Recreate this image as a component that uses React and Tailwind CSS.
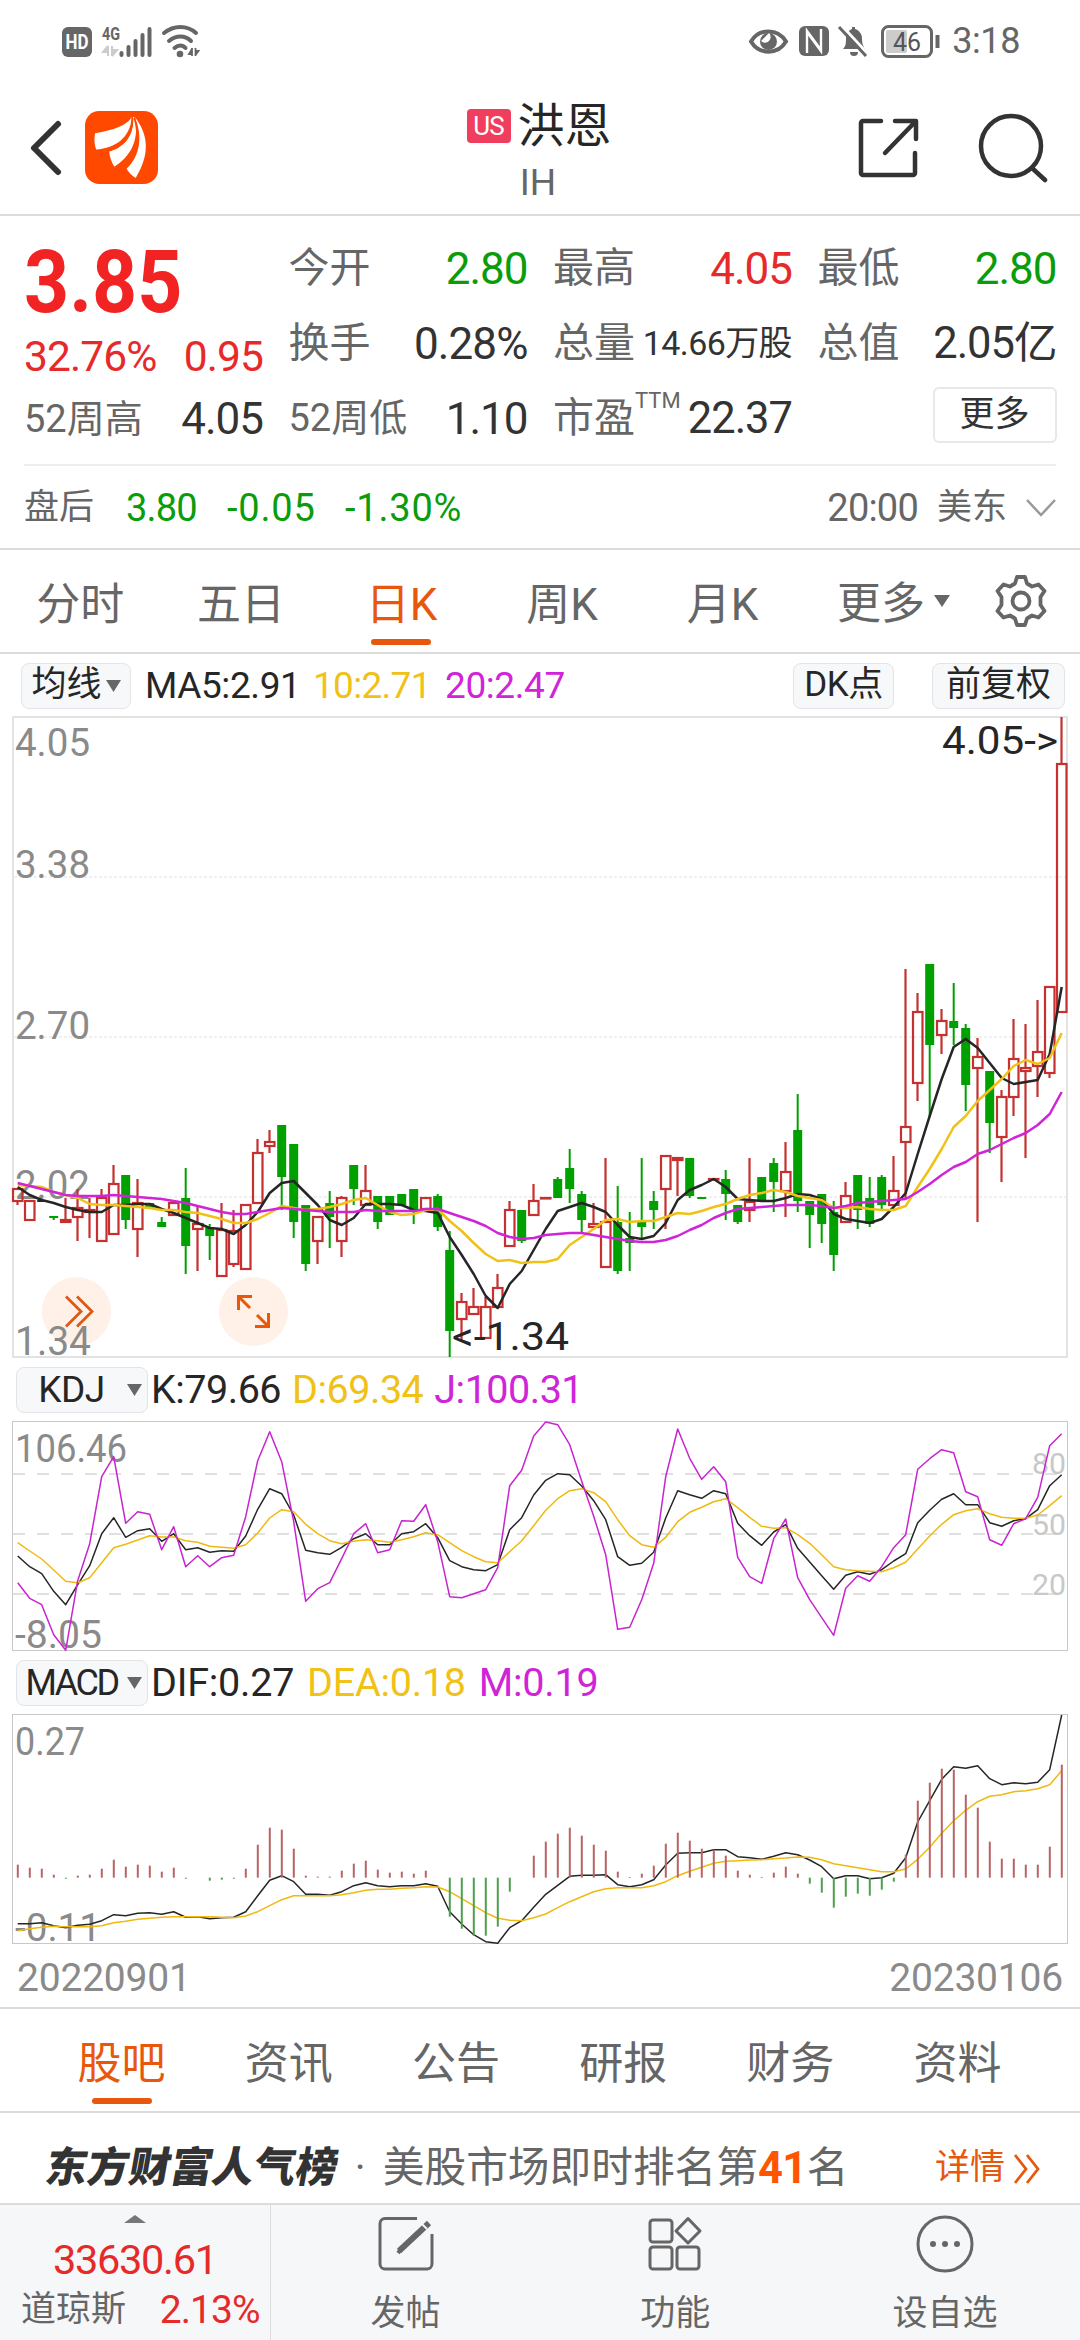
import clsx from "clsx";

// [direction, high, bodyTop, bodyBottom, low] in chart pixels
const candles = [
  ["u", 471, 471, 485, 488], ["u", 483, 483, 504, 504], ["k", 483, 483, 485, 485], ["d", 499, 499, 501, 503],
  ["u", 481, 502, 506, 506], ["u", 472, 490, 501, 524], ["u", 481, 492, 496, 521], ["u", 472, 480, 525, 525],
  ["u", 448, 466, 518, 518], ["d", 458, 458, 503, 512], ["u", 462, 485, 513, 540], ["d", 486, 486, 491, 491],
  ["d", 500, 505, 510, 510], ["u", 485, 485, 499, 499], ["d", 451, 481, 529, 557], ["u", 488, 506, 513, 554],
  ["d", 507, 511, 519, 543], ["u", 486, 512, 560, 560], ["u", 493, 513, 548, 550], ["u", 487, 487, 553, 553],
  ["u", 422, 435, 487, 487], ["u", 413, 424, 430, 436], ["d", 408, 408, 460, 493], ["d", 427, 427, 505, 521],
  ["d", 488, 488, 547, 554], ["u", 499, 499, 525, 547], ["d", 474, 486, 500, 531], ["u", 479, 480, 525, 540],
  ["d", 448, 448, 472, 488], ["u", 448, 473, 489, 489], ["d", 479, 479, 505, 512], ["d", 479, 479, 498, 498],
  ["d", 477, 477, 488, 488], ["d", 472, 472, 493, 507], ["u", 480, 480, 493, 493], ["d", 477, 479, 510, 514],
  ["d", 514, 533, 614, 640], ["u", 576, 584, 603, 625], ["u", 571, 589, 598, 598], ["u", 580, 589, 622, 622],
  ["u", 557, 570, 591, 591], ["u", 484, 492, 530, 530], ["d", 493, 493, 524, 526], ["u", 467, 483, 499, 499],
  ["u", 480, 480, 482, 482], ["d", 460, 462, 481, 481], ["d", 432, 451, 472, 486], ["d", 474, 477, 503, 516],
  ["u", 486, 506, 511, 511], ["u", 441, 504, 551, 551], ["d", 469, 505, 554, 557], ["d", 495, 521, 526, 554],
  ["d", 441, 505, 510, 523], ["d", 474, 484, 493, 512], ["u", 438, 438, 473, 512], ["u", 440, 440, 444, 479],
  ["d", 441, 441, 479, 481], ["d", 480, 480, 482, 482], ["u", 461, 461, 463, 463], ["d", 453, 462, 477, 503],
  ["d", 488, 488, 505, 507], ["u", 441, 484, 494, 505], ["d", 460, 460, 484, 484], ["d", 441, 446, 465, 495],
  ["u", 425, 454, 475, 500], ["d", 377, 413, 484, 495], ["d", 484, 484, 498, 531], ["d", 477, 477, 507, 526],
  ["d", 484, 495, 538, 554], ["u", 465, 478, 506, 506], ["d", 458, 458, 493, 512], ["d", 460, 481, 507, 510],
  ["d", 458, 460, 488, 492], ["u", 439, 473, 489, 489], ["u", 252, 409, 426, 481], ["u", 276, 294, 367, 384],
  ["d", 247, 247, 328, 400], ["u", 292, 303, 319, 337], ["d", 266, 304, 311, 328], ["d", 307, 311, 368, 394],
  ["u", 321, 339, 352, 505], ["d", 354, 354, 406, 436], ["u", 373, 379, 421, 465], ["u", 302, 341, 381, 399],
  ["u", 307, 350, 355, 441], ["u", 283, 334, 350, 380], ["u", 269, 269, 357, 361], ["u", 0, 46, 296, 296],
];

const ma5 = [
  470, 478, 483, 486, 490, 493, 495, 495, 488, 488, 487, 487, 492, 496, 501, 506, 511, 512, 517, 508, 495, 476,
  466, 464, 476, 488, 503, 508, 501, 487, 487, 487, 488, 493, 494, 496, 520, 538, 557, 579, 591, 567, 554, 533,
  512, 494, 490, 486, 490, 495, 508, 520, 522, 519, 506, 483, 473, 468, 462, 470, 482, 483, 484, 484, 481, 477,
  478, 482, 497, 502, 504, 506, 502, 490, 476, 437, 399, 362, 330, 322, 331, 346, 361, 367, 365, 363, 337, 270,
];
const ma10 = [
  468, 469, 470, 475, 478, 481, 487, 488, 488, 489, 490, 491, 493, 493, 495, 496, 499, 502, 506, 506, 502, 496,
  489, 491, 493, 492, 490, 487, 483, 481, 488, 495, 498, 497, 493, 492, 504, 514, 526, 537, 544, 543, 546, 545,
  545, 542, 528, 520, 512, 503, 502, 505, 504, 504, 500, 496, 497, 494, 490, 487, 482, 478, 476, 473, 475, 479,
  481, 483, 491, 491, 490, 492, 493, 493, 489, 470, 452, 432, 410, 399, 384, 373, 362, 349, 343, 347, 341, 316,
];
const ma20 = [
  466, 469, 472, 475, 478, 479, 479, 479, 478, 479, 480, 481, 482, 484, 486, 489, 492, 495, 497, 497, 495, 493,
  491, 492, 493, 494, 495, 495, 495, 493, 494, 494, 494, 494, 492, 492, 496, 500, 504, 509, 516, 520, 522, 521,
  518, 517, 516, 516, 518, 520, 522, 524, 525, 525, 523, 519, 513, 508, 501, 496, 492, 491, 490, 489, 488, 488,
  488, 489, 491, 489, 486, 485, 484, 483, 482, 475, 467, 458, 450, 445, 437, 433, 427, 421, 416, 408, 397, 375,
];

const kdj = {
  k: [
    586, 618, 639, 692, 732, 672, 615, 519, 471, 530, 510, 504, 542, 519, 567, 561, 575, 570, 572, 526, 446, 384,
    399, 463, 569, 576, 581, 560, 534, 519, 552, 552, 519, 513, 489, 531, 600, 618, 627, 630, 612, 507, 471, 403,
    359, 339, 342, 376, 420, 477, 588, 614, 608, 575, 472, 390, 402, 413, 390, 399, 488, 525, 554, 514, 492, 563,
    604, 645, 686, 644, 633, 641, 627, 601, 579, 486, 449, 416, 399, 432, 432, 486, 497, 480, 474, 447, 375, 342,
  ],
  d: [
    546, 571, 595, 628, 662, 666, 651, 606, 561, 551, 538, 525, 529, 529, 540, 545, 557, 560, 563, 552, 517, 472,
    447, 453, 491, 519, 540, 549, 542, 537, 540, 545, 537, 528, 516, 522, 546, 570, 588, 603, 606, 573, 540, 495,
    449, 414, 390, 384, 396, 423, 477, 525, 552, 560, 530, 483, 455, 440, 423, 414, 441, 470, 497, 503, 501, 522,
    548, 582, 618, 627, 630, 632, 633, 621, 605, 565, 526, 491, 462, 450, 444, 459, 470, 473, 473, 463, 435, 405,
  ],
  j: [
    666, 713, 732, 822, 869, 660, 549, 348, 288, 488, 453, 461, 567, 498, 618, 585, 618, 591, 584, 468, 300, 213,
    303, 483, 722, 684, 666, 594, 519, 489, 576, 567, 480, 482, 432, 543, 708, 711, 699, 687, 621, 375, 329, 226,
    184, 192, 252, 362, 467, 582, 806, 800, 717, 608, 348, 205, 293, 356, 318, 363, 590, 648, 668, 534, 475, 651,
    717, 771, 824, 683, 645, 662, 618, 561, 522, 326, 294, 267, 276, 393, 408, 537, 554, 489, 474, 410, 255, 219,
  ],
};

const macd = {
  bars: [
    642, 651, 654, 672, 684, 675, 672, 654, 627, 648, 642, 645, 663, 651, 684, 681, 690, 687, 684, 654, 582, 531,
    537, 594, 675, 678, 678, 660, 639, 630, 657, 666, 663, 669, 660, 681, 798, 834, 855, 855, 828, 723, 681, 615,
    573, 549, 531, 555, 582, 600, 663, 679, 669, 645, 579, 546, 570, 594, 597, 615, 660, 672, 679, 666, 648, 669,
    699, 726, 771, 738, 729, 735, 717, 693, 612, 450, 396, 354, 357, 432, 471, 573, 624, 624, 642, 642, 588, 342,
  ],
  dif: [
    819, 819, 816, 825, 831, 824, 821, 810, 792, 795, 788, 786, 791, 783, 800, 798, 804, 801, 800, 783, 735, 689,
    675, 693, 731, 731, 734, 723, 705, 696, 705, 708, 705, 705, 699, 707, 783, 820, 852, 873, 878, 831, 810, 770,
    731, 704, 677, 674, 674, 672, 702, 708, 702, 687, 643, 608, 606, 606, 597, 597, 618, 621, 626, 617, 606, 612,
    628, 648, 684, 675, 675, 684, 681, 668, 621, 514, 450, 386, 348, 353, 345, 384, 402, 396, 399, 395, 357, 193,
  ],
  dea: [
    840, 834, 830, 827, 828, 828, 828, 825, 816, 812, 806, 803, 800, 798, 798, 798, 798, 800, 801, 796, 783, 765,
    747, 735, 735, 735, 735, 732, 726, 719, 716, 716, 713, 711, 708, 709, 723, 744, 765, 786, 803, 809, 810, 801,
    790, 771, 753, 738, 723, 714, 711, 711, 711, 705, 693, 675, 662, 650, 638, 632, 630, 628, 627, 624, 622, 619,
    620, 627, 639, 645, 651, 657, 663, 663, 655, 626, 590, 548, 510, 479, 453, 437, 432, 423, 420, 414, 402, 360,
  ],
};

const px = (i) => 17.7 + i * 12;
const points = (values, y = (v) => v) =>
  values.map((v, i) => `${px(i).toFixed(1)},${y(v).toFixed(1)}`).join(" ");
// indicator series are stored at three units per pixel
const kdjY = (v) => (v - 181) / 3;
const macdY = (v) => (v - 190) / 3;

const Line = ({ values, y, color, width = 1.5 }) => (
  <polyline points={points(values, y)} fill="none" stroke={color} strokeWidth={width} strokeLinejoin="round" />
);

const Label = ({ x, y, w, size = 38, fill = "#8a8a8a", children }) => (
  <text x={x} y={y} textLength={w} lengthAdjust="spacingAndGlyphs" fontSize={size} fill={fill}>
    {children}
  </text>
);

const StatusBar = () => (
  <div className="flex h-[80px] items-center justify-between pl-[62px] pr-[60px] pt-[1px] text-[#666]">
    <svg width="140" height="50" viewBox="0 -8 140 50">
      <rect x="0" y="3" width="30" height="30" rx="6" fill="#666" />
      <text x="3.5" y="25" fontSize="20" fontWeight="700" fill="#fff" textLength="23" lengthAdjust="spacingAndGlyphs">HD</text>
      <text x="40" y="15.500" fontSize="18.500" fontWeight="700" fill="#666" textLength="18" lengthAdjust="spacingAndGlyphs">4G</text>
      <path d="M46 22v10M46 22l-5 6h5M50 22v10M50 32l5-6h-5" fill="#ccc" stroke="#ccc" strokeWidth="2" />
      <path d="M59.500 29v2M66.500 23v8M73.500 17v14M80.500 11v20M87.500 5v26" stroke="#666" strokeWidth="4" strokeLinecap="round" />
      <g fill="none" stroke="#666" strokeWidth="4" strokeLinecap="round">
        <path d="M102 9c10-8 23-8 32 0" />
        <path d="M107 17c7-6 16-6 22 0" />
        <path d="M112.500 24c4-3.500 8-3.500 11 0" />
      </g>
      <circle cx="118" cy="30" r="3.300" fill="#666" />
      <path d="M130 24v8M130 25l-3 5h3M133.500 24v8M133.500 31l3-4h-3" fill="#666" stroke="#666" strokeWidth="1.800" />
    </svg>
    <div className="flex items-center">
      <svg width="194" height="34" viewBox="0 0 194 34">
        <path d="M2 17.500C10 4 29 4 37 17.500C29 31 10 31 2 17.500Z" fill="none" stroke="#666" strokeWidth="4" />
        <circle cx="19.500" cy="17.500" r="8.500" fill="#666" />
        <path d="M20 9a5.500 5.500 0 0 1-8 8" fill="#fff" />
        <rect x="50" y="2" width="30" height="30" rx="6" fill="#666" />
        <path d="M58 29V7l14 19M72 5v22L58 8" fill="none" stroke="#fff" strokeWidth="2.400" />
        <path d="M94 25c3-3 3-6 3-11c0-5 3-8 6-9v-2h3v2c4 1 7 5 7 9c0 6 1 8 3 11Z" fill="#666" />
        <path d="M101 28h8a4 4 0 0 1-8 0Z" fill="#666" />
        <path d="M93 2l26 28" stroke="#fff" strokeWidth="3" />
        <path d="M90 3l27 29" stroke="#666" strokeWidth="3" />
        <rect x="133.500" y="2.500" width="49" height="30" rx="6" fill="none" stroke="#666" strokeWidth="3" />
        <rect x="137" y="6" width="21" height="23" rx="2" fill="#ccc" />
        <path d="M188.500 11v13" stroke="#666" strokeWidth="4" />
        <text x="144" y="26.500" fontSize="26" fill="#555" textLength="28" lengthAdjust="spacingAndGlyphs">46</text>
      </svg>
      <span className="ml-[9px] text-[36px] tracking-[-0.4px]">3:18</span>
    </div>
  </div>
);

const Header = () => (
  <div className="flex h-[136px] items-center justify-between border-b-2 border-[#dcdcdc] pl-[28px] pr-[32px]">
    <div className="flex w-[316px] items-center gap-[20px] pt-[1px]">
      <svg width="37" height="60" viewBox="0 0 37 60">
        <path d="M30 6L6 30L30 54" fill="none" stroke="#333" strokeWidth="6" strokeLinecap="round" strokeLinejoin="round" />
      </svg>
      <svg width="73" height="73" viewBox="0 0 72 72">
        <rect width="72" height="72" rx="14" fill="#ff4800" />
        <path d="M46 6C42 14 28 19 10 22C9 26 9 32 11 38C30 37 45 26 46 6Z" fill="#fff" />
        <path d="M47.500 6C48.500 22 42 34 24 40C24 45 26 50 29 55C44 46 55 28 48.500 6Z" fill="#fff" />
        <path d="M49 6C62 22 65 42 50 66C46 64 43 60 41 57C55 44 57 24 49 6Z" fill="#fff" />
        <path d="M46.800 7C47 24 38 36 22 39.500M48.700 7C55 26 50 44 30 56" fill="none" stroke="#ff4800" strokeWidth="1.600" />
      </svg>
    </div>
    <div className="flex flex-col items-center pt-[6px]">
      <div className="flex items-center pt-[2px] pl-[2px]">
        <span className="flex h-[34px] w-[44px] items-center justify-center rounded-[4px] bg-[#f03e5f] text-[26px] tracking-[-1px] text-white">US</span>
        <span className="ml-[7px] text-[47px] leading-[60px] text-[#262626]">洪恩</span>
      </div>
      <span className="mt-[4px] text-[37px] leading-[46px] text-[#666]">IH</span>
    </div>
    <div className="flex w-[316px] items-center justify-end gap-[58px] pt-[1px]">
      <svg width="62" height="62" viewBox="0 0 62 62" fill="none" stroke="#333" strokeWidth="4.500" strokeLinecap="round" strokeLinejoin="round">
        <path d="M23 4H5a2 2 0 0 0-2 2V56a2 2 0 0 0 2 2H55a2 2 0 0 0 2-2V36" />
        <path d="M37 4H58V22M57 5L27 36" />
      </svg>
      <svg width="70" height="70" viewBox="0 0 70 70" fill="none" stroke="#333" strokeWidth="4.500" strokeLinecap="round">
        <circle cx="33" cy="33" r="30" />
        <path d="M54 55L67 67" />
      </svg>
    </div>
  </div>
);

const Cell = ({ label, value, className, labelClass = "text-[41px]", valueClass = "text-[44px] tracking-[-1px]" }) => (
  <div className={clsx("flex w-[239px] items-center justify-between whitespace-nowrap", className)}>
    <span className={clsx("text-[#666]", labelClass)}>{label}</span>
    <span className={valueClass}>{value}</span>
  </div>
);

const Quote = () => (
  <div className="flex h-[334px] flex-col border-b-2 border-[#dcdcdc] px-[24px]">
    <div className="flex h-[250px] gap-[25.500px] border-b-2 border-[#eee] text-[#333]">
      <div className="w-[239px] pt-[20px]">
        <div className="h-[90px] w-[180px] origin-left scale-x-[0.895] text-[88px] leading-[92px] font-bold text-[#f22323]">3.85</div>
        <div className="flex h-[62px] items-center justify-between text-[42.500px] tracking-[-0.900px] text-[#e62a2a]">
          <span>32.76%</span>
          <span>0.95</span>
        </div>
        <Cell label="52周高" value="4.05" labelClass="text-[38px]" className="h-[62px]" />
      </div>
      <div className="w-[239px] pt-[15px]">
        <Cell label="今开" value="2.80" className="h-[75px]" valueClass="text-[44px] tracking-[-1px] text-[#0a9c0a]" />
        <Cell label="换手" value="0.28%" className="h-[75px]" valueClass="text-[44px] tracking-[-0.900px]" />
        <Cell label="52周低" value="1.10" className="h-[75px]" labelClass="text-[38px]" />
      </div>
      <div className="w-[239px] pt-[15px]">
        <Cell label="最高" value="4.05" className="h-[75px]" valueClass="text-[44px] tracking-[-1px] text-[#e62a2a]" />
        <Cell label="总量" value="14.66万股" className="h-[75px]" valueClass="text-[34px] tracking-[-0.600px]" />
        <div className="flex h-[75px] items-center justify-between text-[43.500px] tracking-[-1px]">
          <span className="flex text-[41px] tracking-normal text-[#666]">
            市盈<span className="-mt-[3px] text-[22px] leading-[32px]">TTM</span>
          </span>
          <span>22.37</span>
        </div>
      </div>
      <div className="w-[239px] pt-[15px]">
        <Cell label="最低" value="2.80" className="h-[75px]" valueClass="text-[44px] tracking-[-1px] text-[#0a9c0a]" />
        <Cell label="总值" value="2.05亿" className="h-[75px]" valueClass="text-[43.500px] tracking-[-1px]" />
        <div className="flex h-[68px] items-center justify-end">
          <button className="flex h-[56px] w-[124px] items-center justify-center rounded-[6px] border-2 border-[#e6e8ea] text-[35px] text-[#333]">更多</button>
        </div>
      </div>
    </div>
    <div className="flex flex-1 items-center pt-[2px] text-[38px] tracking-[-0.800px] text-[#0a9c0a]">
      <span className="w-[102px] text-[35px] tracking-normal text-[#666]">盘后</span>
      <span className="w-[101px]">3.80</span>
      <span className="w-[118px] tracking-[0.800px]">-0.05</span>
      <span className="flex-1 tracking-[0.800px]">-1.30%</span>
      <span className="text-[#666]">20:00</span>
      <span className="ml-[19px] text-[35px] tracking-normal text-[#666]">美东</span>
      <svg width="30" height="20" viewBox="0 0 30 20" className="ml-[19px]">
        <path d="M1 2L15 17L29 2" fill="none" stroke="#999" strokeWidth="2.500" />
      </svg>
    </div>
  </div>
);

const Gear = () => (
  <svg width="54" height="54" viewBox="0 0 54 54" fill="none" stroke="#666" strokeWidth="3.800" strokeLinejoin="round">
    <path d="M23 3H31L33 9.500L38 12.500L44.500 10.500L50.500 17L46.500 23V31L50.500 37L44.500 43.500L38 41.500L33 44.500L31 51H23L21 44.500L16 41.500L9.500 43.500L3.500 37L7.500 31V23L3.500 17L9.500 10.500L16 12.500L21 9.500Z" />
    <circle cx="27" cy="27" r="8.500" />
  </svg>
);

const PeriodTabs = () => (
  <div className="flex h-[104px] items-center border-b-2 border-[#dcdcdc] text-[44px] text-[#666]">
    {["分时", "五日", "日K", "周K", "月K"].map((t) => (
      <div key={t} className={clsx("flex h-full w-[160.600px] flex-col items-center pt-[22px]", t === "日K" && "text-[#e8580c]")}>
        <span className="leading-[66px]">{t}</span>
        {t === "日K" && <span className="mt-[1px] h-[6px] w-[60px] rounded-full bg-[#e8580c]" />}
      </div>
    ))}
    <div className="ml-[34px] flex items-center pt-[5px]">
      <span>更多</span>
      <svg width="16" height="12" viewBox="0 0 16 12" className="mt-[-6px] ml-[9px]"><path d="M0 0H16L8 12Z" fill="#666" /></svg>
    </div>
    <div className="ml-[44px]"><Gear /></div>
  </div>
);

const Chip = ({ className, children }) => (
  <button className={clsx("flex h-[46px] items-center justify-center whitespace-nowrap rounded-[8px] border border-[#e2e4e8] bg-[#f7f8fa] text-[#262626]", className)}>
    {children}
  </button>
);

const Down = ({ className }) => (
  <svg width="15" height="12" viewBox="0 0 15 12" className={className}><path d="M0 0H15L7.500 12Z" fill="#666" /></svg>
);

const MaBar = () => (
  <div className="flex h-[62px] items-center pl-[21px] pr-[15px] pt-[1px] text-[37px] tracking-[-0.400px] text-[#262626]">
    <Chip className="w-[110px] text-[35px] tracking-normal">均线<Down className="ml-[4px]" /></Chip>
    <span className="ml-[14px] w-[168px]">MA5:2.91</span>
    <span className="w-[132px] tracking-[-0.700px] text-[#f0c117]">10:2.71</span>
    <span className="flex-1 text-[#d024d8]">20:2.47</span>
    <Chip className="w-[101px] text-[35px] tracking-[-0.500px]">DK点</Chip>
    <Chip className="ml-[38px] w-[133px] text-[35px] tracking-normal">前复权</Chip>
  </div>
);

const Candle = ({ i, data }) => {
  const [dir, high, top, bottom, low] = data;
  const x = px(i) - 0.2;
  if (dir === "u") {
    const flat = bottom - top < 5;
    return (
      <g stroke="#c53030" strokeWidth="2.200">
        {high < top && <path d={`M${x} ${high}V${top}`} />}
        {low > bottom && <path d={`M${x} ${bottom}V${low}`} />}
        <rect
          x={x - 4.5}
          y={top + 1}
          width="9.500"
          height={Math.max(bottom - top - 2, 0.5)}
          fill={flat ? "#c53030" : "none"}
        />
      </g>
    );
  }
  const color = dir === "d" ? "#00a000" : "#262626";
  return (
    <g fill={color}>
      <rect x={x - 0.8} y={high} width="2" height={low - high} />
      <rect x={x - 4.3} y={top} width="9" height={bottom - top} />
    </g>
  );
};

const KChart = () => (
  <div className="mx-[12px] h-[642px] border-2 border-[#e3e3e3]">
    <svg width="1056" height="642" viewBox="12 -1 1056 642" className="-m-[2px] overflow-visible">
      <g stroke="#f0f0f0" strokeWidth="2" strokeDasharray="3 2">
        <path d="M14 160H1066M14 320H1066M14 480H1066" />
      </g>
      <Label x="15" y="39" w="75">4.05</Label>
      <Label x="15" y="161" w="75">3.38</Label>
      <Label x="15" y="322" w="75">2.70</Label>
      <Label x="15" y="482" w="75" size={40}>2.02</Label>
      {candles.map((c, i) => (
        <Candle key={i} i={i} data={c} />
      ))}
      <circle cx="76.500" cy="594.500" r="34.500" fill="#fff0e8" />
      <g fill="none" stroke="#dc5a14" strokeWidth="2.800">
        <path d="M66 579.500L81 594.500L66 609.500M77 579.500L92 594.500L77 609.500" />
      </g>
      <circle cx="253.500" cy="594.500" r="34.500" fill="#fff0e8" />
      <g fill="none" stroke="#e8580c" strokeWidth="3">
        <path d="M238.500 593V579.500H252M239 580L250 591" />
        <path d="M268.500 596V609.500H255M268 609L257 598" />
      </g>
      <Label x="15" y="638" w="76" size={40}>1.34</Label>
      <Line values={ma5} color="#262626" width={2.5} />
      <Line values={ma10} color="#f0c117" width={2.5} />
      <Line values={ma20} color="#d024d8" width={2.5} />
      <Label x="942" y="37" w="116" size={39} fill="#262626">4.05-&gt;</Label>
      <Label x="452" y="633" w="117" size={39} fill="#262626">&lt;-1.34</Label>
    </svg>
  </div>
);

const IndicatorBar = ({ name, nameClass, values, gapClass }) => (
  <div className={clsx("flex h-[63px] items-center pl-[16px] text-[39.500px]", gapClass)}>
    <div className="flex items-center">
      <Chip className="w-[132px] shrink-0">
        <span className={clsx("w-[98px] text-center", nameClass)}>{name}</span>
        <Down className="ml-[6px]" />
      </Chip>
      <span className="ml-[3px] text-[#262626]">{values[0]}</span>
    </div>
    <span className="text-[#f0c117]">{values[1]}</span>
    <span className="text-[#d024d8]">{values[2]}</span>
  </div>
);

const KdjChart = () => (
  <div className="mx-[12px] h-[230px] border border-[#c8c8c8]">
    <svg width="1056" height="230" viewBox="12 0 1056 230" className="-m-px overflow-visible">
      <g stroke="#e0e0e0" strokeWidth="2" strokeDasharray="12 12">
        <path d="M13 53H1066M13 113H1066M13 173H1066" />
      </g>
      <Label x="15" y="41" w="112">106.46</Label>
      <Label x="15" y="227" w="87">-8.05</Label>
      <Label x="1032" y="53" w="34" size={29} fill="#c8c8c8">80</Label>
      <Label x="1032" y="113.500" w="34" size={29} fill="#c8c8c8">50</Label>
      <Label x="1032" y="173.500" w="34" size={29} fill="#c8c8c8">20</Label>
      <Line values={kdj.k} y={kdjY} color="#262626" />
      <Line values={kdj.d} y={kdjY} color="#f0b90f" />
      <Line values={kdj.j} y={kdjY} color="#c824d0" />
    </svg>
  </div>
);

const MacdChart = () => (
  <div className="mx-[12px] h-[230px] border border-[#c8c8c8]">
    <svg width="1056" height="230" viewBox="12 0 1056 230" className="-m-px overflow-visible">
      <Label x="15" y="41" w="70">0.27</Label>
      <Label x="15" y="227" w="86">-0.11</Label>
      <Line values={macd.dif} y={macdY} color="#262626" />
      <Line values={macd.dea} y={macdY} color="#f0b90f" />
      {macd.bars.map((v, i) => (
        <rect
          key={i}
          x={px(i) - 0.9}
          y={macdY(Math.min(v, 681))}
          width="2"
          height={Math.abs(v - 681) / 3}
          fill={v > 681 ? "#4ea04e" : "#b86464"}
        />
      ))}
    </svg>
  </div>
);

const SectionTabs = () => (
  <div className="flex h-[104px] border-b-2 border-[#dcdcdc] pl-[38px] text-[44px] text-[#666]">
    {["股吧", "资讯", "公告", "研报", "财务", "资料"].map((t, i) => (
      <div key={t} className={clsx("flex w-[167.200px] flex-col items-center pt-[22px]", i === 0 && "text-[#e8580c]")}>
        <span className="leading-[66px]">{t}</span>
        {i === 0 && <span className="mt-[1px] h-[6px] w-[60px] rounded-full bg-[#e8580c]" />}
      </div>
    ))}
  </div>
);

const RankRow = () => (
  <div className="flex h-[92px] items-center whitespace-nowrap border-b-2 border-[#dcdcdc] pl-[46px] pr-[39px] pt-[21px] text-[41.700px] text-[#666]">
    <span className="-skew-x-[10deg] text-[41.700px] font-black text-[#333]">东方财富人气榜</span>
    <span className="w-[45px] text-center">·</span>
    <span>美股市场即时排名第</span>
    <span className="text-[43.500px] font-bold tracking-[-0.600px] text-[#ff5500]">41</span>
    <span>名</span>
    <span className="ml-auto text-[35px] text-[#e8580c]">详情</span>
    <svg width="28" height="32" viewBox="0 0 28 32" className="ml-[8px]">
      <path d="M2 2L13 16L2 30M14 2L25 16L14 30" fill="none" stroke="#e8580c" strokeWidth="2.800" />
    </svg>
  </div>
);

const NavItem = ({ label, children }) => (
  <div className="flex w-[270px] flex-col items-center pt-[9px]">
    <svg width="60" height="60" viewBox="0 0 60 60" fill="none" stroke="#666" strokeWidth="3">{children}</svg>
    <span className="mt-[15px] text-[35px] leading-[50px]">{label}</span>
  </div>
);

const BottomBar = () => (
  <div className="flex h-[135px] bg-[#f6f7f9] text-[#666]">
    <div className="flex w-[271px] flex-col items-center border-r border-[#dcdcdc] pt-[10px]">
      <svg width="22" height="8" viewBox="0 0 22 8"><path d="M0 8L11 0L22 8Z" fill="#777" /></svg>
      <span className="mt-[12px] text-[41.500px] leading-[50px] tracking-[-1.300px] text-[#e62a2a]">33630.61</span>
      <div className="flex w-full items-center justify-between pl-[21px] pr-[10px] text-[35px] leading-[50px]">
        <span>道琼斯</span>
        <span className="text-[39px] tracking-[-0.900px] text-[#e62a2a]">2.13%</span>
      </div>
    </div>
    <NavItem label="发帖">
      <path d="M41 4.500H9a5 5 0 0 0-5 5V50a5 5 0 0 0 5 5H51a5 5 0 0 0 5-5V20" />
      <path d="M53 9L23 37" strokeWidth="6" />
      <path d="M26 34L22 39" strokeWidth="4" />
      <path d="M46 10L51 15" stroke="#f6f7f9" strokeWidth="2" />
    </NavItem>
    <NavItem label="功能">
      <rect x="5" y="6" width="22" height="22" rx="3" />
      <path d="M43 4.500L55 17L43 29L31 17Z" strokeLinejoin="round" />
      <rect x="5" y="33" width="22" height="22" rx="3" />
      <rect x="32" y="33" width="22" height="22" rx="3" />
    </NavItem>
    <NavItem label="设自选">
      <circle cx="30" cy="30" r="27" />
      <g fill="#666" stroke="none">
        <circle cx="18" cy="30" r="3" />
        <circle cx="30" cy="30" r="3" />
        <circle cx="42" cy="30" r="3" />
      </g>
    </NavItem>
  </div>
);

const App = () => {
  return (
    <div className="h-[2340px] w-[1080px] overflow-hidden bg-white font-[Roboto,'Noto_Sans_CJK_SC',sans-serif]">
      <StatusBar />
      <Header />
      <Quote />
      <PeriodTabs />
      <MaBar />
      <KChart />
      <IndicatorBar name="KDJ" nameClass="text-[37px]" values={["K:79.66", "D:69.34", "J:100.31"]} gapClass="gap-[11px] tracking-[-0.500px]" />
      <KdjChart />
      <IndicatorBar name="MACD" nameClass="text-[36px] tracking-[-2.500px]" values={["DIF:0.27", "DEA:0.18", "M:0.19"]} gapClass="gap-[13px] tracking-[-0.250px]" />
      <MacdChart />
      <div className="flex h-[65px] items-center justify-between border-b-2 border-[#dcdcdc] px-[17px] pt-[6px] text-[39px] tracking-[-0.200px] text-[#8a8a8a]">
        <span>20220901</span>
        <span>20230106</span>
      </div>
      <SectionTabs />
      <RankRow />
      <BottomBar />
    </div>
  );
};

export default App;
